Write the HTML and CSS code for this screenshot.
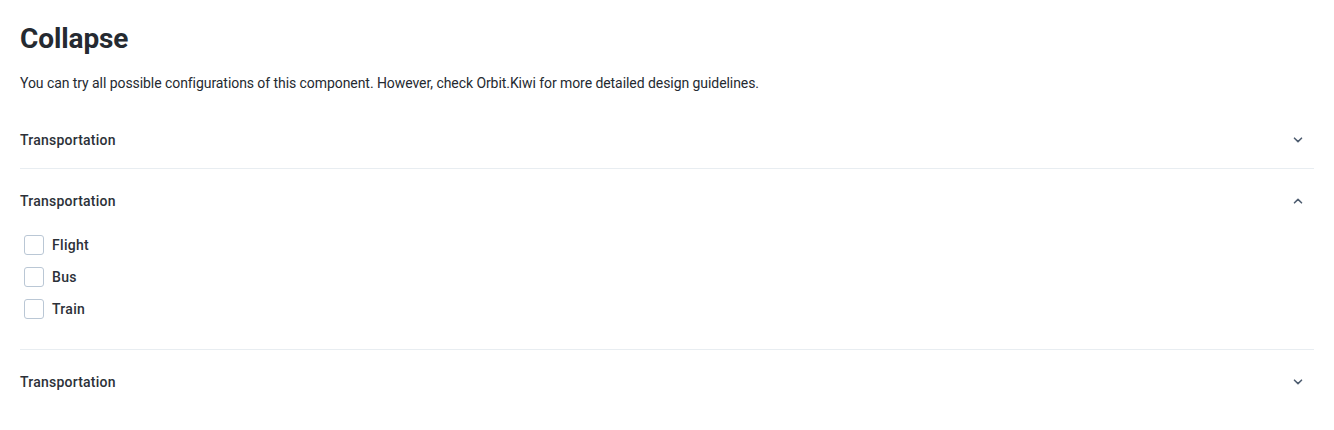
FILE: index.html
```html
<!DOCTYPE html>
<html lang="en">
<head>
<meta charset="utf-8">
<title>Collapse</title>
<link rel="stylesheet" href="styles.css">
</head>
<body>
<main class="page">
  <h1 class="title">Collapse</h1>
  <p class="intro">You can try all possible configurations of this component. However, check Orbit.Kiwi for more detailed design guidelines.</p>

  <section class="collapse">
    <div class="collapse-header">
      <span class="collapse-label">Transportation</span>
      <svg class="chevron" viewBox="0 0 16 16" width="16" height="16"><polyline points="4.5,6.2 8,9.6 11.5,6.2"/></svg>
    </div>
  </section>

  <section class="collapse">
    <div class="collapse-header">
      <span class="collapse-label">Transportation</span>
      <svg class="chevron" viewBox="0 0 16 16" width="16" height="16"><polyline points="4.5,9.8 8,6.4 11.5,9.8"/></svg>
    </div>
    <div class="collapse-content">
      <label class="checkbox"><span class="box"></span><span class="checkbox-label">Flight</span></label>
      <label class="checkbox"><span class="box"></span><span class="checkbox-label">Bus</span></label>
      <label class="checkbox"><span class="box"></span><span class="checkbox-label">Train</span></label>
    </div>
  </section>

  <section class="collapse collapse-last">
    <div class="collapse-header">
      <span class="collapse-label">Transportation</span>
      <svg class="chevron" viewBox="0 0 16 16" width="16" height="16"><polyline points="4.5,6.2 8,9.6 11.5,6.2"/></svg>
    </div>
  </section>
</main>
</body>
</html>
```

FILE: styles.css
```css
html, body {
  margin: 0;
  padding: 0;
  background: #ffffff;
}

body {
  font-family: Roboto, "Liberation Sans", Arial, sans-serif;
  color: #252a31;
}

.page {
  padding: 21px 20px 0 20px;
}

.title {
  margin: 1px 0 0 0;
  font-size: 28px;
  line-height: 34px;
  font-weight: 700;
  color: #252a31;
  letter-spacing: -0.1px;
}

.intro {
  margin: 17px 0 37px 0;
  font-size: 14px;
  line-height: 20px;
  color: #252a31;
  letter-spacing: -0.065px;
}

.collapse {
  padding-bottom: 18px;
  border-bottom: 1px solid #e8edf1;
}

.collapse + .collapse {
  padding-top: 22px;
}

.collapse-last {
  border-bottom: none;
}

.collapse-header {
  display: flex;
  align-items: center;
  justify-content: space-between;
  height: 20px;
  padding-right: 8px;
}

.collapse-label {
  font-size: 14px;
  line-height: 20px;
  font-weight: 500;
  color: #2c3139;
  letter-spacing: 0.22px;
}

.chevron {
  display: block;
  fill: none;
  stroke: #4f5e71;
  stroke-width: 1.6;
  stroke-linecap: round;
  stroke-linejoin: round;
}

.collapse-content {
  display: flex;
  flex-direction: column;
  gap: 12px;
  padding: 24px 0 12px 4px;
}

.checkbox {
  display: flex;
  align-items: center;
  gap: 8px;
  height: 20px;
}

.box {
  box-sizing: border-box;
  width: 20px;
  height: 20px;
  border: 1px solid #bac7d5;
  border-radius: 3px;
  background: #ffffff;
}

.checkbox-label {
  font-size: 14px;
  line-height: 20px;
  font-weight: 500;
  color: #2c3139;
  letter-spacing: 0.3px;
}
```
